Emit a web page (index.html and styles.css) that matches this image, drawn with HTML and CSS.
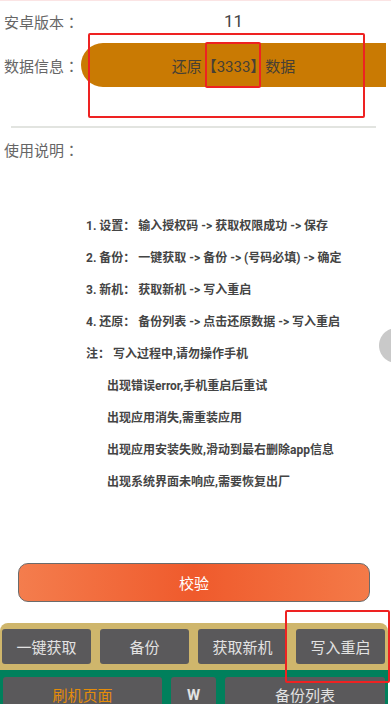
FILE: index.html
```html
<!DOCTYPE html>
<html lang="zh-CN">
<head>
    <meta charset="UTF-8">
    <meta name="viewport" content="width=device-width, initial-scale=1.0">
    <title>备份还原</title>
    <link rel="stylesheet" href="styles.css">
</head>
<body>
    <div class="page">
        <div class="info-row">
            <span class="label">安卓版本<span class="colon" lang="ja">：</span></span>
            <span class="value">11</span>
        </div>
        <div class="info-row data-row">
            <span class="label">数据信息<span class="colon" lang="ja">：</span></span>
            <div class="restore-pill">还原【3333】数据</div>
        </div>

        <div class="divider"></div>

        <div class="section-title">使用说明<span class="colon" lang="ja">：</span></div>

        <div class="guide">
            <div class="guide-line">1. 设置： 输入授权码 -&gt; 获取权限成功 -&gt; 保存</div>
            <div class="guide-line">2. 备份： 一键获取 -&gt; 备份 -&gt; (号码必填) -&gt; 确定</div>
            <div class="guide-line">3. 新机： 获取新机 -&gt; 写入重启</div>
            <div class="guide-line">4. 还原： 备份列表 -&gt; 点击还原数据 -&gt; 写入重启</div>
            <div class="guide-line">注： 写入过程中,请勿操作手机</div>
            <div class="guide-line sub">出现错误error,手机重启后重试</div>
            <div class="guide-line sub">出现应用消失,需重装应用</div>
            <div class="guide-line sub">出现应用安装失败,滑动到最右删除app信息</div>
            <div class="guide-line sub">出现系统界面未响应,需要恢复出厂</div>
        </div>

        <div class="check-btn">校验</div>

        <div class="action-panel">
            <div class="action-row">
                <div class="btn">一键获取</div>
                <div class="btn">备份</div>
                <div class="btn">获取新机</div>
                <div class="btn">写入重启</div>
            </div>
            <div class="nav-row">
                <div class="btn flash">刷机页面</div>
                <div class="btn bold">W</div>
                <div class="btn">备份列表</div>
            </div>
        </div>
    </div>

    <!-- annotation marks drawn over the screen -->
    <div class="mark mark-pill"></div>
    <div class="mark mark-count"></div>
    <div class="mark mark-write"></div>

    <div class="float-ball"></div>
</body>
</html>
```

FILE: styles.css
```css
body {
    margin: 0;
    font-family: Roboto, "Noto Sans CJK SC", sans-serif;
    background-color: #fff;
    color: #666;
    height: 704px;
    overflow: hidden;
    position: relative;
}

.page {
    border-top: 1px solid #fbe4e4;
    display: flex;
    flex-direction: column;
}

.info-row {
    display: flex;
    align-items: center;
    height: 40px;
}

.data-row {
    height: 44px;
    margin-top: 2px;
}

.label {
    width: 81px;
    padding-left: 4px;
    box-sizing: border-box;
    font-family: "Noto Sans CJK SC", sans-serif;
    font-size: 15px;
    color: #666;
    flex-shrink: 0;
}

/* centred full-width colon as on the device */
.colon {
    font-family: "Noto Sans CJK JP", sans-serif;
}

.value {
    width: 305px;
    text-align: center;
    font-size: 17px;
    color: #444;
}

.restore-pill {
    width: 305px;
    height: 44px;
    background: #c97a03;
    border-radius: 22px 0 0 22px;
    display: flex;
    align-items: center;
    justify-content: center;
    font-size: 15px;
    color: #463f35;
}

.divider {
    margin: 39px 0 0 11px;
    width: 365px;
    height: 2px;
    background: #e2e4e0;
}

.section-title {
    margin-top: 12px;
    padding-left: 4px;
    line-height: 20px;
    font-family: "Noto Sans CJK SC", sans-serif;
    font-size: 15px;
    color: #666;
}

.guide {
    margin-top: 50px;
    padding-left: 86px;
}

.guide-line {
    line-height: 32px;
    font-size: 12px;
    font-weight: bold;
    color: #444;
    white-space: pre;
}

.guide-line.sub {
    padding-left: 21px;
}

.check-btn {
    margin: 65px 0 0 18px;
    width: 352px;
    height: 39px;
    box-sizing: border-box;
    border: 1.5px solid #6b6b6b;
    border-radius: 10px;
    background: linear-gradient(90deg, #f47d4d 0%, #ef5a2c 50%, #f47a48 100%);
    display: flex;
    align-items: center;
    justify-content: center;
    font-size: 15px;
    color: #fff;
}

.action-panel {
    margin-top: 21px;
    width: 388px;
    border-radius: 8px 8px 0 0;
    overflow: hidden;
}

.action-row {
    background: #cfb66c;
    padding: 6px 3px 6px 2px;
    display: grid;
    grid-template-columns: repeat(4, 1fr);
    gap: 9px;
}

.nav-row {
    background: #00805c;
    padding: 7px 3px 0 3px;
    display: grid;
    grid-template-columns: 159px 45px 1fr;
    gap: 9px;
}

.btn {
    height: 35px;
    background: #5a595b;
    border-radius: 3px;
    display: flex;
    align-items: center;
    justify-content: center;
    font-size: 15px;
    color: #e2e2e2;
}

.btn.flash {
    color: #e58c0a;
}

.btn.bold {
    font-weight: bold;
}

.mark {
    position: absolute;
    border: 2px solid #ee2222;
    box-sizing: border-box;
    border-radius: 2px;
}

.mark-pill {
    left: 88px;
    top: 33px;
    width: 277px;
    height: 85px;
}

.mark-count {
    left: 205px;
    top: 42px;
    width: 56px;
    height: 46px;
}

.mark-write {
    left: 285px;
    top: 610px;
    width: 105px;
    height: 73px;
}

/* floating ball, only its left part is on screen */
.float-ball {
    position: absolute;
    left: 379px;
    top: 328px;
    width: 12px;
    height: 35px;
    background: radial-gradient(circle at 17.5px 17.5px, #c9c9c9 17px, rgba(201, 201, 201, 0) 18px);
}
```
